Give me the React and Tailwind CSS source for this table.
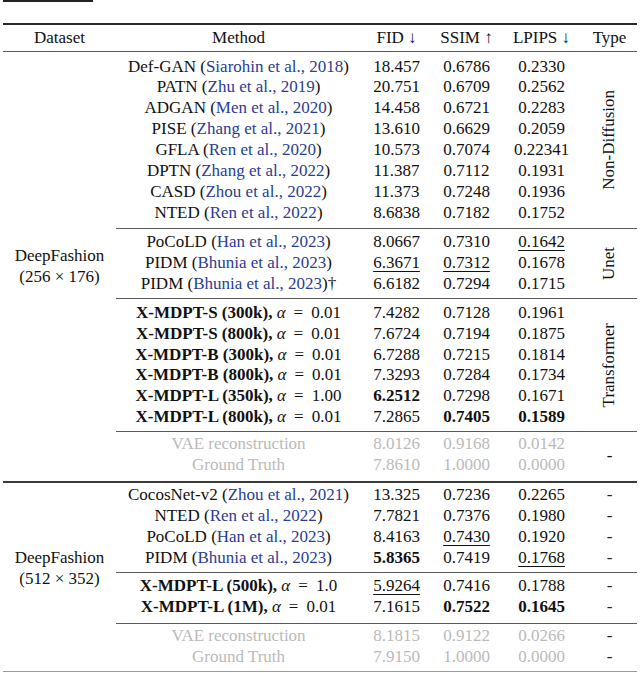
import React from 'react';

// '_' prefix = underlined (second best), '*' prefix = bold (best)
const Num = ({ v }) => {
  if (v.startsWith('_')) {
    return <span className="underline decoration-1 underline-offset-[3px]">{v.slice(1)}</span>;
  }
  if (v.startsWith('*')) return <span className="font-bold">{v.slice(1)}</span>;
  return <span>{v}</span>;
};

const Method = ({ m }) => {
  if (m.ours) {
    return (
      <span>
        <span className="font-bold">{m.ours}</span> <i>α</i>
        <span className="px-[8px]">=</span>
        {m.alpha}
      </span>
    );
  }
  if (m.gray) return <span>{m.gray}</span>;
  return (
    <span>
      {m.name} (<span className="text-[#2a3d94]">{m.cite}</span>){m.dagger ? '†' : ''}
    </span>
  );
};

const Row = ({ row, gray, dash }) => (
  <div className={`flex h-[20.85px] leading-[20.85px] ${gray ? 'text-[#bababa]' : ''}`}>
    <div className="w-[245px] text-center whitespace-nowrap">
      <Method m={row.m} />
    </div>
    <div className="w-[71px] text-center"><Num v={row.fid} /></div>
    <div className="w-[69px] text-center"><Num v={row.ssim} /></div>
    <div className="w-[81px] text-center"><Num v={row.lpips} /></div>
    {dash && <div className="w-[55px] text-center text-[#222]">-</div>}
  </div>
);

const Section = ({ rows, label, perRow, gray, pad }) => (
  <div className={`flex ${pad}`}>
    <div className="flex flex-col">
      {rows.map((r, i) => (
        <Row key={i} row={r} gray={gray} dash={perRow} />
      ))}
    </div>
    {!perRow && (
      <div className="w-[55px] flex items-center justify-center">
        {label === '-' ? (
          <span>-</span>
        ) : (
          <span className="[writing-mode:vertical-rl] rotate-180 leading-none pl-[3px] whitespace-nowrap">{label}</span>
        )}
      </div>
    )}
  </div>
);

const Rule = ({ thick }) => (
  <div className={thick ? 'h-[1.5px] bg-[#3a3a3a]' : 'h-[1px] bg-[#5a5a5a]'} />
);

const nonDiff = [
  { m: { name: 'Def-GAN', cite: 'Siarohin et al., 2018' }, fid: '18.457', ssim: '0.6786', lpips: '0.2330' },
  { m: { name: 'PATN', cite: 'Zhu et al., 2019' }, fid: '20.751', ssim: '0.6709', lpips: '0.2562' },
  { m: { name: 'ADGAN', cite: 'Men et al., 2020' }, fid: '14.458', ssim: '0.6721', lpips: '0.2283' },
  { m: { name: 'PISE', cite: 'Zhang et al., 2021' }, fid: '13.610', ssim: '0.6629', lpips: '0.2059' },
  { m: { name: 'GFLA', cite: 'Ren et al., 2020' }, fid: '10.573', ssim: '0.7074', lpips: '0.22341' },
  { m: { name: 'DPTN', cite: 'Zhang et al., 2022' }, fid: '11.387', ssim: '0.7112', lpips: '0.1931' },
  { m: { name: 'CASD', cite: 'Zhou et al., 2022' }, fid: '11.373', ssim: '0.7248', lpips: '0.1936' },
  { m: { name: 'NTED', cite: 'Ren et al., 2022' }, fid: '8.6838', ssim: '0.7182', lpips: '0.1752' },
];

const unet = [
  { m: { name: 'PoCoLD', cite: 'Han et al., 2023' }, fid: '8.0667', ssim: '0.7310', lpips: '_0.1642' },
  { m: { name: 'PIDM', cite: 'Bhunia et al., 2023' }, fid: '_6.3671', ssim: '_0.7312', lpips: '0.1678' },
  { m: { name: 'PIDM', cite: 'Bhunia et al., 2023', dagger: true }, fid: '6.6182', ssim: '0.7294', lpips: '0.1715' },
];

const transformer = [
  { m: { ours: 'X-MDPT-S (300k),', alpha: '0.01' }, fid: '7.4282', ssim: '0.7128', lpips: '0.1961' },
  { m: { ours: 'X-MDPT-S (800k),', alpha: '0.01' }, fid: '7.6724', ssim: '0.7194', lpips: '0.1875' },
  { m: { ours: 'X-MDPT-B (300k),', alpha: '0.01' }, fid: '6.7288', ssim: '0.7215', lpips: '0.1814' },
  { m: { ours: 'X-MDPT-B (800k),', alpha: '0.01' }, fid: '7.3293', ssim: '0.7284', lpips: '0.1734' },
  { m: { ours: 'X-MDPT-L (350k),', alpha: '1.00' }, fid: '*6.2512', ssim: '0.7298', lpips: '0.1671' },
  { m: { ours: 'X-MDPT-L (800k),', alpha: '0.01' }, fid: '7.2865', ssim: '*0.7405', lpips: '*0.1589' },
];

const ref256 = [
  { m: { gray: 'VAE reconstruction' }, fid: '8.0126', ssim: '0.9168', lpips: '0.0142' },
  { m: { gray: 'Ground Truth' }, fid: '7.8610', ssim: '1.0000', lpips: '0.0000' },
];

const base512 = [
  { m: { name: 'CocosNet-v2', cite: 'Zhou et al., 2021' }, fid: '13.325', ssim: '0.7236', lpips: '0.2265' },
  { m: { name: 'NTED', cite: 'Ren et al., 2022' }, fid: '7.7821', ssim: '0.7376', lpips: '0.1980' },
  { m: { name: 'PoCoLD', cite: 'Han et al., 2023' }, fid: '8.4163', ssim: '_0.7430', lpips: '0.1920' },
  { m: { name: 'PIDM', cite: 'Bhunia et al., 2023' }, fid: '*5.8365', ssim: '0.7419', lpips: '_0.1768' },
];

const ours512 = [
  { m: { ours: 'X-MDPT-L (500k),', alpha: '1.0' }, fid: '_5.9264', ssim: '0.7416', lpips: '0.1788' },
  { m: { ours: 'X-MDPT-L (1M),', alpha: '0.01' }, fid: '7.1615', ssim: '*0.7522', lpips: '*0.1645' },
];

const ref512 = [
  { m: { gray: 'VAE reconstruction' }, fid: '8.1815', ssim: '0.9122', lpips: '0.0266' },
  { m: { gray: 'Ground Truth' }, fid: '7.9150', ssim: '1.0000', lpips: '0.0000' },
];

const DatasetLabel = ({ res, extra = '' }) => (
  <div className={`w-[113px] flex flex-col items-center justify-center leading-[20.8px] ${extra}`}>
    <span>DeepFashion</span>
    <span>({res})</span>
  </div>
);

export default function App() {
  return (
    <div className="w-[640px] h-[673px] overflow-hidden bg-white text-[#111] text-[17px] font-[family-name:Liberation_Serif,DejaVu_Serif,serif]">
      {/* tail of the text above the table */}
      <div className="h-[23px]">
        <div className="ml-[3px] w-[90px] h-[1.5px] bg-[#222]" />
      </div>

      <div className="ml-[3px] w-[634px]">
        <div className="h-[2px] bg-[#2a2a2a]" />

        {/* header */}
        <div className="flex pt-[3px] pb-[2.5px] h-[26.35px] leading-[20.85px]">
          <div className="w-[113px] text-center">Dataset</div>
          <div className="w-[245px] text-center">Method</div>
          <div className="w-[71px] text-center">FID ↓</div>
          <div className="w-[69px] text-center">SSIM ↑</div>
          <div className="w-[81px] text-center">LPIPS ↓</div>
          <div className="w-[55px] text-center">Type</div>
        </div>
        <Rule />

        {/* DeepFashion 256 x 176 */}
        <div className="flex">
          <DatasetLabel res="256 × 176" />
          <div className="flex flex-col">
            <Section rows={nonDiff} label="Non-Diffusion" pad="pt-[4.3px] pb-[4.5px]" />
            <Rule />
            <Section rows={unet} label="Unet" pad="pt-[3px] pb-[4px]" />
            <Rule />
            <Section rows={transformer} label="Transformer" pad="pt-[3.5px] pb-[3px]" />
            <Rule />
            <Section rows={ref256} label="-" gray pad="pt-[2.5px] pb-[5px]" />
          </div>
        </div>
        <Rule thick />

        {/* DeepFashion 512 x 352 */}
        <div className="flex">
          <DatasetLabel res="512 × 352" extra="pb-[16px]" />
          <div className="flex flex-col">
            <Section rows={base512} perRow pad="pt-[2.7px] pb-[3.6px]" />
            <Rule />
            <Section rows={ours512} perRow pad="pt-[3px] pb-[5px]" />
            <Rule />
            <Section rows={ref512} perRow gray pad="pt-[2.3px] pb-[3px]" />
          </div>
        </div>
        <div className="h-[1px] bg-[#9a9a9a]" />
      </div>
    </div>
  );
}
